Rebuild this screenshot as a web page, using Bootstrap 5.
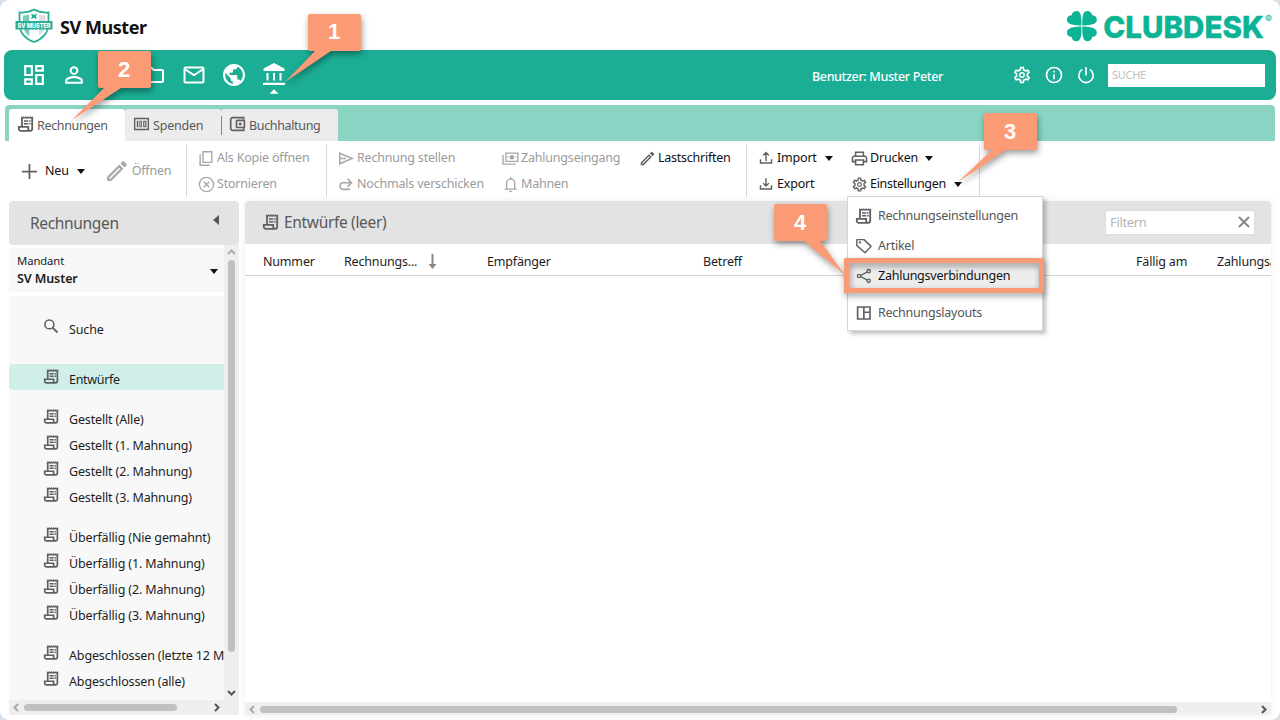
<!DOCTYPE html>
<html lang="de">
<head>
<meta charset="utf-8">
<title>SV Muster – ClubDesk</title>
<link href="https://cdn.jsdelivr.net/npm/bootstrap@5.3.0/dist/css/bootstrap.min.css" rel="stylesheet">
<style>
body{width:1280px;height:720px;overflow:hidden;background:#d5e0ec;font-family:"Noto Sans","Open Sans",sans-serif;font-size:12.5px;line-height:18px;letter-spacing:-.18px;color:#1d1d1d}
svg{display:block;flex:none}
.ic{width:18px;height:18px;fill:currentColor;color:#606060}
.page{width:1280px;height:720px;background:#fff;border-radius:9px;overflow:hidden}
.brandbar{height:50px}
.brandbar .title{font-size:18px;font-weight:700;line-height:24px;letter-spacing:-.45px;color:#111;margin:4px 0 0 6px}
.mainbar{height:50px;margin:0 4px;background:#1bae94;border-radius:8px;color:#fff}
.mainbar .ic{width:24px;height:24px;color:#fff}
.mainbar .tools .ic{width:20px;height:20px}
.user{font-size:12.5px;font-weight:500;letter-spacing:-.36px;margin-top:3px}
.searchbox{width:157px;height:23px;background:#fff;color:#c0c0c0;font-size:11px;line-height:22px;padding-left:4px;letter-spacing:-.3px}
.tabbar{height:36px;margin:5px 5px 0;background:#8ad4c4;border-radius:4px 4px 0 0;padding:4px 0 0 4px}
.tab{height:32px;background:#ececec;color:#595959;padding-left:8px;border-radius:3px 3px 0 0;letter-spacing:-.2px}
.tab span{margin:2px 0 0 2px}
.tab.on{background:#fff}
.tab .ic{margin-bottom:2px}
.ribbon{height:60px;margin-left:9px;position:relative}
.grp{border-right:1px solid #d9d9d9;height:52px;margin-top:4px;position:relative}
.cell{height:26px;gap:2px;display:flex;align-items:center;color:#111;white-space:nowrap;letter-spacing:-.2px}
.cell .ic{width:17px;height:17px}
.off,.off .ic{color:#9b9b9b}
.off .ic{color:#a8a8a8}
.caret{width:0;height:0;border:4px solid transparent;border-top:5px solid #111;border-bottom:0;margin-left:6px}
.panelhead{height:43px;background:#e3e3e3;color:#595959;font-size:15.5px;letter-spacing:-.33px}
.side{width:230px}
.side .panelhead{border-radius:4px;height:44px;padding:0 20px 0 21px}
.sidebody{width:215px;overflow:hidden}
.mandant{height:44px;background:#f8f8f8;margin-top:3px;padding:0 6px 0 8px;font-size:11.3px;letter-spacing:-.1px}
.mandant b{font-size:12.5px;font-weight:600;letter-spacing:-.1px}
.tree{background:#f8f8f8;height:404px;margin-top:4px;padding-top:18px}
.node{height:26px;padding-left:34px;display:flex;align-items:center;white-space:nowrap;gap:9px;letter-spacing:-.15px}
.node span{padding-top:5px}
.node .ic{margin-bottom:1px;width:17px;height:17px}
.node.on{background:#d0efe9;border-radius:4px 0 0 4px}
.vbar{width:15px;height:455px;background:#efefef}
.hbar{height:15px;background:#efefef}
.thumb{background:#c0c0c0;border-radius:4px}
.main{width:1026px;margin-left:6px;box-shadow:0 0 8px #00000012}
.main .panelhead{border-radius:4px 4px 0 0;padding:0 16px 1px 17px}
.filterbox{width:150px;height:25px;border:1px solid #dcdcdc;background:#fff;font-size:13px;color:#b5b5b5;padding:0 4px 0 4px}
.heads{height:32px;border-bottom:1px solid #d4d4d4;padding:4px 0 0 18px;white-space:nowrap;overflow:hidden}
.heads span{flex:none}
.menu{left:838px;top:55px;width:196px;height:135px;background:#fff;border:1px solid #d6d6d6;box-shadow:3px 3px 4px #0000003d;z-index:3;padding-top:4px}
.mi{height:30px;padding-left:7px;gap:5px;display:flex;align-items:center;color:#555;font-size:12.5px;letter-spacing:-.24px}
.mi.on{background:#ededed;color:#111}
.marks{left:0;top:0;z-index:9;pointer-events:none}
.marks g{filter:drop-shadow(1px 3px 3px #00000066)}
</style>
</head>
<body>
<svg width="0" height="0" class="position-absolute">
<symbol id="rec" viewBox="0 0 18 18"><path d="M5 11.500V2.600M15.200 2.600v11.200a2 2 0 0 1-2 2H3.700a1.900 1.900 0 0 1-1.900-2v-1.900h9.400v1.900a1.900 1.900 0 0 0 2 2" fill="none" stroke="currentColor" stroke-width="1.800"/><path d="M4.100 3.600V1.300l1.200.9 1.100-.9 1.200.9 1.200-.9 1.200.9 1.200-.9 1.200.9 1.200-.9 1.200.9 1.300-.9v2.300z"/><path d="M7 5.300h4.300v1.500H7zM7 8h4.300v1.500H7zM12.200 5.300h1.500v1.500h-1.500zM12.200 8h1.500v1.500h-1.500z"/></symbol>
<symbol id="dash" viewBox="0 0 24 24"><path transform="translate(-1.200 -1.200) scale(1.100)" d="M19 5v2h-4V5h4M9 5v6H5V5h4m10 8v6h-4v-6h4M9 17v2H5v-2h4M21 3h-8v6h8V3zM11 3H3v10h8V3zm10 8h-8v10h8V11zm-10 4H3v6h8v-6z"/></symbol>
<symbol id="person" viewBox="0 0 24 24"><path transform="translate(-1.200 -1.200) scale(1.100)" d="M12 5.900c1.160 0 2.100.94 2.100 2.100s-.94 2.100-2.100 2.100S9.900 9.160 9.900 8s.94-2.100 2.100-2.100m0 9c2.970 0 6.100 1.460 6.100 2.100v1.100H5.900V17c0-.64 3.130-2.100 6.100-2.100M12 4C9.790 4 8 5.790 8 8s1.790 4 4 4 4-1.790 4-4-1.790-4-4-4zm0 9c-2.670 0-8 1.340-8 4v3h16v-3c0-2.660-5.330-4-8-4z"/></symbol>
<symbol id="folder" viewBox="0 0 24 24"><path d="M9.170 6l2 2H20v10H4V6h5.170M10 4H4c-1.100 0-1.990.9-1.990 2L2 18c0 1.100.9 2 2 2h16c1.100 0 2-.9 2-2V8c0-1.100-.9-2-2-2h-8l-2-2z"/></symbol>
<symbol id="mail" viewBox="0 0 24 24"><path d="M22.500 5.500c0-1.100-.9-2-2-2h-17c-1.100 0-2 .9-2 2v13c0 1.100.9 2 2 2h17c1.100 0 2-.9 2-2zm-2 0L12 11 3.500 5.500zm0 13h-17V7.700L12 13.200l8.500-5.500z"/></symbol>
<symbol id="globe" viewBox="0 0 24 24"><path transform="translate(-1.200 -1.200) scale(1.100)" d="M12 2C6.480 2 2 6.480 2 12s4.480 10 10 10 10-4.480 10-10S17.520 2 12 2zm-1 17.930c-3.950-.49-7-3.850-7-7.930 0-.62.08-1.210.21-1.790L9 15v1c0 1.100.9 2 2 2v1.930zm6.900-2.540c-.26-.81-1-1.390-1.900-1.390h-1v-3c0-.55-.45-1-1-1H8v-2h2c.55 0 1-.45 1-1V7h2c1.100 0 2-.9 2-2v-.41c2.930 1.190 5 4.060 5 7.410 0 2.080-.8 3.970-2.100 5.390z"/></symbol>
<symbol id="bank" viewBox="0 0 24 24"><path d="M12 0L1.500 5.500V8h21V5.500zM4.500 10h2v7.500h-2zM11 10h2v7.500h-2zM17.500 10h2v7.500h-2zM1 19.700h22V22H1z"/></symbol>
<symbol id="gear" viewBox="0 0 24 24"><path d="M19.430 12.980c.04-.32.07-.64.07-.98 0-.34-.03-.66-.07-.98l2.110-1.650c.19-.15.24-.42.12-.64l-2-3.460c-.09-.16-.26-.25-.44-.25-.06 0-.12.01-.17.03l-2.490 1c-.52-.4-1.080-.73-1.690-.98l-.38-2.650C14.460 2.180 14.250 2 14 2h-4c-.25 0-.46.18-.49.42l-.38 2.650c-.61.25-1.170.59-1.690.98l-2.490-1c-.06-.02-.12-.03-.18-.03-.17 0-.34.09-.43.25l-2 3.460c-.13.22-.07.49.12.64l2.110 1.650c-.04.32-.07.65-.07.98 0 .33.03.66.07.98l-2.110 1.650c-.19.15-.24.42-.12.64l2 3.460c.09.16.26.25.44.25.06 0 .12-.01.17-.03l2.490-1c.52.4 1.080.73 1.690.98l.38 2.650c.03.24.24.42.49.42h4c.25 0 .46-.18.49-.42l.38-2.650c.61-.25 1.170-.59 1.690-.98l2.490 1c.06.02.12.03.18.03.17 0 .34-.09.43-.25l2-3.460c.12-.22.07-.49-.12-.64l-2.110-1.650zm-1.980-1.710c.04.31.05.52.05.73 0 .21-.02.43-.05.73l-.14 1.130.89.7 1.080.84-.7 1.210-1.270-.51-1.040-.42-.9.68c-.43.32-.84.56-1.250.73l-1.060.43-.16 1.130-.2 1.350h-1.400l-.19-1.350-.16-1.130-1.060-.43c-.43-.18-.83-.41-1.230-.71l-.91-.7-1.060.43-1.270.51-.7-1.210 1.080-.84.89-.7-.14-1.130c-.03-.31-.05-.54-.05-.74s.02-.43.05-.73l.14-1.130-.89-.7-1.080-.84.7-1.210 1.270.51 1.040.42.9-.68c.43-.32.84-.56 1.250-.73l1.060-.43.16-1.130.2-1.350h1.390l.19 1.350.16 1.130 1.060.43c.43.18.83.41 1.230.71l.91.7 1.060-.43 1.270-.51.7 1.210-1.070.85-.89.7.14 1.130zM12 8.500a3.500 3.500 0 1 0 0 7 3.500 3.500 0 0 0 0-7zm0 5.300a1.800 1.800 0 1 1 0-3.600 1.800 1.800 0 0 1 0 3.600z"/></symbol>
<symbol id="info" viewBox="0 0 24 24"><path d="M11 7h2v2h-2zM11 11h2v6h-2z"/><circle cx="12" cy="12" r="9" fill="none" stroke="currentColor" stroke-width="2"/></symbol>
<symbol id="power" viewBox="0 0 24 24"><path d="M12 2.500v10M7.500 5.200a8.600 8.600 0 1 0 9 0" fill="none" stroke="currentColor" stroke-width="1.900"/></symbol>
<symbol id="cash" viewBox="0 0 18 18"><path d="M1 2.500h16v13H1zm1.500 1.500v10h13V4z" fill-rule="evenodd"/><path d="M4 5.500h1.600v7H4zM6.700 5.500h2.700v7H6.700zm1 1.200v4.600h.7V6.700zM10.800 5.500h3.400v7h-3.400zm1.200 1.200v4.600h.9V6.700z" fill-rule="evenodd"/></symbol>
<symbol id="wallet" viewBox="0 0 18 18"><g fill="none" stroke="currentColor" stroke-width="1.700"><path d="M14.700 4.500V2.700H3.500a1.800 1.800 0 0 0-1.800 2v8.600a1.800 1.800 0 0 0 1.800 2h11.200v-2"/><rect x="7.500" y="5.300" width="7.900" height="7.200" rx=".8"/></g><circle cx="11.200" cy="9" r="1.500"/></symbol>
<symbol id="plus" viewBox="0 0 18 18"><path d="M8 1h1.900v7.100H17V10H9.900v7H8v-7H1V8.100h7z"/></symbol>
<symbol id="pen" viewBox="0 0 24 24"><path d="M14.060 9.020l.92.92L5.920 19H5v-.92l9.060-9.060M17.660 3c-.25 0-.51.1-.7.29l-1.830 1.830 3.750 3.750 1.830-1.830c.39-.39.39-1.020 0-1.410l-2.340-2.340c-.2-.2-.45-.29-.71-.29zm-3.600 3.190L3 17.250V21h3.750L17.810 9.940l-3.750-3.750z" transform="translate(-2.400 -2.400) scale(1.200)"/></symbol>
<symbol id="copy" viewBox="0 0 24 24"><path d="M7 2.500h12.500v15H7zM3 6v15.500h13.500" fill="none" stroke="currentColor" stroke-width="2"/></symbol>
<symbol id="cancel" viewBox="0 0 24 24"><path d="M8 8l8 8M16 8l-8 8" stroke="currentColor" stroke-width="1.900"/><circle cx="12" cy="12" r="10" fill="none" stroke="currentColor" stroke-width="1.900"/></symbol>
<symbol id="send" viewBox="0 0 24 24"><path d="M2.500 4.500L20 12 2.500 19.500zM3 12h8.500" fill="none" stroke="currentColor" stroke-width="2.200"/></symbol>
<symbol id="redo" viewBox="0 0 24 24"><path d="M18.500 9.500H7.500a4.700 4.700 0 0 0 0 9.400H17M13.500 4l5.500 5.500-5.500 5.500" fill="none" stroke="currentColor" stroke-width="2.200"/></symbol>
<symbol id="notes" viewBox="0 0 24 24"><path d="M5.500 4.500h17v11.500h-17zM1.500 7v13h18" fill="none" stroke="currentColor" stroke-width="1.900"/><circle cx="14" cy="10.200" r="3.200"/><path d="M7.500 9.300h1.600v1.800H7.500zM19 9.300h1.600v1.800H19z"/></symbol>
<symbol id="bell" viewBox="0 0 24 24"><path d="M6.500 18v-8a5.700 5.700 0 0 1 11.400 0v8M3.500 18.500h17.400M12.200 1.500v3" fill="none" stroke="currentColor" stroke-width="2"/><path d="M10 20.800h4.400a2.200 2.200 0 0 1-4.400 0z"/></symbol>
<symbol id="up" viewBox="0 0 24 24"><path d="M2.500 14v6.500h19V14M12 17V3M7 7.500l5-5 5 5" fill="none" stroke="currentColor" stroke-width="2.400"/></symbol>
<symbol id="down" viewBox="0 0 24 24"><path d="M2.500 14v6.500h19V14M12 2v13M7 10.500l5 5 5-5" fill="none" stroke="currentColor" stroke-width="2.400"/></symbol>
<symbol id="print" viewBox="0 0 24 24"><path d="M19 8h-1V3H6v5H5c-1.660 0-3 1.340-3 3v6h4v4h12v-4h4v-6c0-1.660-1.340-3-3-3zM8 5h8v3H8V5zm8 14H8v-4h8zm2-4v-2H6v2H4v-4c0-.55.45-1 1-1h14c.55 0 1 .45 1 1v4h-2z" transform="translate(-1.200 -1.200) scale(1.100)"/></symbol>
<symbol id="label" viewBox="0 0 24 24"><path d="M2.500 3.500h9.500l9.500 9-8 8.500L2.500 11.500z" fill="none" stroke="currentColor" stroke-width="1.900" stroke-linejoin="round"/><circle cx="6.600" cy="7.300" r="1.500"/></symbol>
<symbol id="share" viewBox="0 0 24 24"><g fill="none" stroke="currentColor" stroke-width="2.100"><path d="M6 12l12-6.800M6 12l12 6.800"/></g><g fill="#ededed" stroke="currentColor" stroke-width="2"><circle cx="4.500" cy="12" r="2.500"/><circle cx="19" cy="4.800" r="2.500"/><circle cx="19" cy="19.200" r="2.500"/></g></symbol>
<symbol id="layout" viewBox="0 0 24 24"><path d="M3.500 4h16.500v16H3.500zM11.800 4v16M11.800 11H20" fill="none" stroke="currentColor" stroke-width="2.200"/></symbol>
<symbol id="lens" viewBox="0 0 24 24"><circle cx="9" cy="9" r="6.300" fill="none" stroke="currentColor" stroke-width="2.200"/><path d="M13.500 13.500l7 7" stroke="currentColor" stroke-width="2.600"/></symbol>
</svg>

<div class="page position-relative">
<header class="brandbar d-flex">
 <svg width="40" height="36" viewBox="0 0 40 36" style="margin:8px 0 0 14px"><path d="M5.500 4.500Q13.500 5 20 1.500Q26.500 5 34.500 4.500V16C34.500 25 28 31.500 20 34C12 31.500 5.500 25 5.500 16z" fill="#fff" stroke="#2baf96" stroke-width="1.800"/><path d="M9 7.500q3 0 6.500-1v22C11 25 9 21 9 16z" fill="#7fcbbb"/><path d="M20 4.500q6 3 11.500 3V16c0 6-4.500 11-11.500 14z" fill="#ddd"/><path d="M15.500 6.500l4.500-2 5 2V29l-5 2.500-4.500-2.500z" fill="#fff"/><path d="M17 5.500l3 1.200 3-1.200-1 2.800 1 2.800-3-1.100-3 1.100 1-2.800z" fill="#2baf96"/><path d="M1.500 13h37v8.500h-37z" fill="#2baf96"/><text x="20" y="19.800" text-anchor="middle" font-family="Inter" font-weight="800" font-size="6.300" fill="#fff" textLength="33" lengthAdjust="spacingAndGlyphs" letter-spacing="0">SV MUSTER</text></svg>
 <div class="title align-self-center">SV Muster</div>
 <svg class="ms-auto" width="216" height="44" viewBox="1064 0 216 44"><g fill="#0cb495"><g id="leafs"><path id="leaf" d="M1081.500 25.600C1076 25.300 1067 25 1067 20C1067 16.500 1069 15.600 1071.600 15.300C1072 12.600 1073.700 11 1077 11C1081.800 11 1081.500 20 1081.500 25.600z"/><use href="#leaf" transform="translate(2163.800 0) scale(-1 1)"/></g><use href="#leafs" transform="translate(0 52.200) scale(1 -1)"/><text x="1103.300" y="37.500" font-family="Inter" font-weight="800" font-size="30.500" letter-spacing="0" textLength="160.500" lengthAdjust="spacingAndGlyphs" stroke="#0cb495" stroke-width=".4">CLUBDESK</text><text x="1264.900" y="23.300" font-family="Inter" font-weight="600" font-size="10.500" letter-spacing="0">®</text></g></svg>
</header>

<nav class="mainbar d-flex align-items-center position-relative">
 <div class="d-flex" style="gap:16px;padding-left:18px">
  <svg class="ic"><use href="#dash"/></svg><svg class="ic"><use href="#person"/></svg><svg class="ic"><use href="#folder"/></svg><svg class="ic"><use href="#folder"/></svg><svg class="ic"><use href="#mail"/></svg><svg class="ic"><use href="#globe"/></svg>
  <svg class="ic overflow-visible" viewBox="0 0 24 24"><use href="#bank" width="24" height="24"/><path d="M7.500 30.800L12 26.300l4.500 4.500z"/></svg>
 </div>
 <div class="user ms-auto" style="width:200px">Benutzer: Muster Peter</div>
 <div class="tools d-flex" style="gap:12px"><svg class="ic"><use href="#gear"/></svg><svg class="ic"><use href="#info"/></svg><svg class="ic"><use href="#power"/></svg></div>
 <div class="searchbox" style="margin:0 11px 0 12px">SUCHE</div>
</nav>

<div class="tabbar d-flex">
 <div class="tab on d-flex align-items-center" style="width:116px"><svg class="ic"><use href="#rec"/></svg><span style="letter-spacing:-.35px">Rechnungen</span></div>
 <div class="tab d-flex align-items-center" style="width:96px"><svg class="ic" style="width:17px"><use href="#cash"/></svg><span style="margin-left:3px">Spenden</span></div>
 <div class="tab d-flex align-items-center" style="width:117px;padding-left:0"><i style="width:1px;height:19px;background:#888;margin-right:7px"></i><svg class="ic"><use href="#wallet"/></svg><span style="margin-left:2px;letter-spacing:-.35px">Buchhaltung</span></div>
</div>

<div class="ribbon d-flex">
 <div class="grp d-flex align-items-center" style="width:178px">
  <div class="cell" style="margin-left:12px;gap:7px"><svg class="ic"><use href="#plus"/></svg>Neu<i class="caret" style="margin-left:1px"></i></div>
  <div class="cell off" style="margin-left:21px;gap:4px"><svg class="ic" style="width:22px;height:22px"><use href="#pen"/></svg>Öffnen</div>
 </div>
 <div class="grp" style="width:140px;padding-left:11px;margin-top:3px;height:53px;padding-top:1px"><div class="cell off"><svg class="ic"><use href="#copy"/></svg>Als Kopie öffnen</div><div class="cell off"><svg class="ic"><use href="#cancel"/></svg>Stornieren</div></div>
 <div class="grp d-flex" style="width:420px;padding-left:11px">
  <div style="width:164px"><div class="cell off"><svg class="ic"><use href="#send"/></svg>Rechnung stellen</div><div class="cell off"><svg class="ic"><use href="#redo"/></svg>Nochmals verschicken</div></div>
  <div style="width:138px"><div class="cell off"><svg class="ic"><use href="#notes"/></svg>Zahlungseingang</div><div class="cell off"><svg class="ic"><use href="#bell"/></svg>Mahnen</div></div>
  <div><div class="cell" style="gap:3px;letter-spacing:-.25px"><svg class="ic" style="width:15px"><use href="#pen"/></svg>Lastschriften</div></div>
 </div>
 <div class="grp d-flex" style="width:233px;padding-left:12px">
  <div style="width:92px"><div class="cell" style="gap:4px"><svg class="ic" style="width:14px;height:14px"><use href="#up"/></svg>Import<i class="caret" style="margin-left:4px"></i></div><div class="cell" style="gap:4px"><svg class="ic" style="width:14px;height:14px"><use href="#down"/></svg>Export</div></div>
  <div><div class="cell"><svg class="ic"><use href="#print"/></svg>Drucken<i class="caret" style="margin-left:5px"></i></div><div class="cell" style="letter-spacing:-.3px"><svg class="ic"><use href="#gear"/></svg>Einstellungen<i class="caret"></i></div></div>
 </div>
 <div class="menu position-absolute">
  <div class="mi"><svg class="ic"><use href="#rec"/></svg>Rechnungseinstellungen</div>
  <div class="mi"><svg class="ic"><use href="#label"/></svg>Artikel</div>
  <div class="mi on"><svg class="ic" style="width:16px;margin:0 1px"><use href="#share"/></svg>Zahlungsverbindungen</div>
  <div class="mi" style="margin-top:7px"><svg class="ic"><use href="#layout"/></svg>Rechnungslayouts</div>
 </div>
</div>

<div class="d-flex" style="padding-left:9px;height:514px">
 <aside class="side">
  <div class="panelhead d-flex align-items-center justify-content-between">Rechnungen<svg width="6" height="10" style="margin-bottom:6px"><path d="M6 0v10L0 5z" fill="#555"/></svg></div>
  <div class="d-flex">
   <div class="sidebody">
    <div class="mandant d-flex justify-content-between align-items-center"><div style="padding-bottom:1px"><div>Mandant</div><b>SV Muster</b></div><i class="caret" style="margin-top:2px"></i></div>
    <div class="tree">
     <div class="node"><svg class="ic"><use href="#lens"/></svg><span>Suche</span></div>
     <div class="node on" style="margin-top:24px"><svg class="ic"><use href="#rec"/></svg><span style="letter-spacing:-.3px">Entwürfe</span></div>
     <div class="node" style="margin-top:14px"><svg class="ic"><use href="#rec"/></svg><span>Gestellt (Alle)</span></div>
     <div class="node"><svg class="ic"><use href="#rec"/></svg><span>Gestellt (1. Mahnung)</span></div>
     <div class="node"><svg class="ic"><use href="#rec"/></svg><span>Gestellt (2. Mahnung)</span></div>
     <div class="node"><svg class="ic"><use href="#rec"/></svg><span>Gestellt (3. Mahnung)</span></div>
     <div class="node" style="margin-top:14px"><svg class="ic"><use href="#rec"/></svg><span>Überfällig (Nie gemahnt)</span></div>
     <div class="node"><svg class="ic"><use href="#rec"/></svg><span>Überfällig (1. Mahnung)</span></div>
     <div class="node"><svg class="ic"><use href="#rec"/></svg><span>Überfällig (2. Mahnung)</span></div>
     <div class="node"><svg class="ic"><use href="#rec"/></svg><span>Überfällig (3. Mahnung)</span></div>
     <div class="node" style="margin-top:14px"><svg class="ic"><use href="#rec"/></svg><span>Abgeschlossen (letzte 12 Monate)</span></div>
     <div class="node"><svg class="ic"><use href="#rec"/></svg><span>Abgeschlossen (alle)</span></div>
    </div>
   </div>
   <div class="vbar d-flex flex-column align-items-center"><svg width="9" height="6" style="margin:4px 0 5px"><path d="M1 5l3.500-3.500L8 5" fill="none" stroke="#aaa" stroke-width="2"/></svg><div class="thumb" style="width:7px;height:392px"></div><svg width="9" height="6" style="margin-top:38px"><path d="M1 1l3.500 3.500L8 1" fill="none" stroke="#555" stroke-width="2"/></svg></div>
  </div>
  <div class="hbar d-flex align-items-center" style="padding:0 19px 0 4px"><svg width="6" height="9"><path d="M5 1L1.500 4.500 5 8" fill="none" stroke="#aaa" stroke-width="2"/></svg><div class="thumb" style="width:153px;height:7px;margin-left:5px"></div><svg class="ms-auto" width="6" height="9"><path d="M1 1l3.500 3.500L1 8" fill="none" stroke="#555" stroke-width="2"/></svg></div>
 </aside>
 <main class="main d-flex flex-column">
  <div class="panelhead d-flex align-items-center"><svg class="ic" style="margin-right:4px"><use href="#rec"/></svg>Entwürfe (leer)<div class="filterbox ms-auto d-flex align-items-center justify-content-between">Filtern<svg width="12" height="12"><path d="M1 1l10 10M11 1L1 11" stroke="#888" stroke-width="2"/></svg></div></div>
  <div class="heads d-flex align-items-center"><span style="width:81px">Nummer</span><span style="width:84px">Rechnungs...</span><span style="width:59px"><svg width="9" height="16"><path d="M4.500 0v11" stroke="#888" stroke-width="2"/><path d="M.5 10h8l-4 5z" fill="#888"/></svg></span><span style="width:216px">Empfänger</span><span style="width:433px">Betreff</span><span style="width:81px">Fällig am</span><span>Zahlungsart</span></div>
  <div class="hbar d-flex align-items-center mt-auto" style="height:13px;padding:1px 4px 0"><svg width="6" height="9"><path d="M5 1L1.500 4.500 5 8" fill="none" stroke="#aaa" stroke-width="2"/></svg><div class="thumb" style="width:917px;height:7px;margin-left:5px"></div><svg class="ms-auto" width="6" height="9"><path d="M1 1l3.500 3.500L1 8" fill="none" stroke="#555" stroke-width="2"/></svg></div>
 </main>
</div>

<svg class="marks position-absolute" width="1280" height="720" font-family="Liberation Sans" font-weight="700" font-size="22" letter-spacing="0" text-anchor="middle">
 <g fill="#fa9b76"><path d="M310 14h49q2 0 2 2v33q0 2-2 2h-28L285 82l30-31h-5q-2 0-2-2V16q0-2 2-2z"/></g>
 <g fill="#fa9b76"><path d="M100 51h49q2 0 2 2v33q0 2-2 2h-28L72 120l32-32h-4q-2 0-2-2V53q0-2 2-2z"/></g>
 <g fill="#fa9b76"><path d="M986 113h49q2 0 2 2v33q0 2-2 2h-29L958 182l34-32h-6q-2 0-2-2v-33q0-2 2-2z"/></g>
 <g fill="#fa9b76"><path d="M776 204h49q2 0 2 2v33q0 2-2 2h-5L845 275l-41-34h-28q-2 0-2-2v-33q0-2 2-2z"/></g>
 <g><rect x="846.500" y="260.500" width="195" height="30" fill="none" stroke="#fa9b76" stroke-width="5"/></g>
 <text x="334" y="39" fill="#fff">1</text><text x="124" y="76.500" fill="#fff">2</text><text x="1010" y="138.500" fill="#fff">3</text><text x="800" y="229.500" fill="#fff">4</text>
</svg>
</div>
<script src="https://cdn.jsdelivr.net/npm/bootstrap@5.3.0/dist/js/bootstrap.bundle.min.js"></script>
</body>
</html>
